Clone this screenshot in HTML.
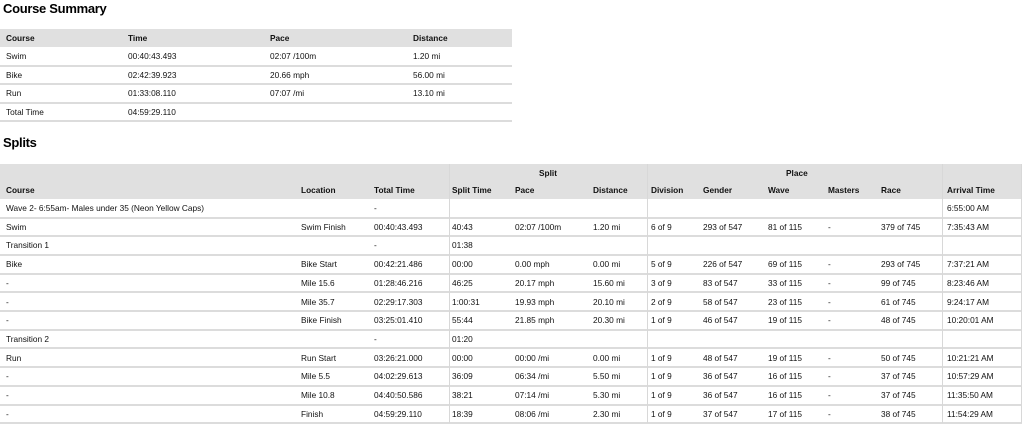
<!DOCTYPE html>
<html><head><meta charset="utf-8"><style>
body{margin:0;width:1024px;height:423px;background:#fff;position:relative;overflow:hidden;font-family:"Liberation Sans",sans-serif;color:#111}
.t{position:absolute;font-size:8.3px;white-space:nowrap;line-height:10px}
.b{font-weight:bold}
.h{position:absolute;font-weight:bold;font-size:13px;letter-spacing:-0.3px;color:#000}
.bg{position:absolute;background:#e0e0e0}
.l{position:absolute;background:#dcdcdc;height:2px}
.v{position:absolute;background:#d8d8d8;width:1px}
</style></head><body>
<div class="h" style="left:3px;top:1px">Course Summary</div>
<div class="bg" style="left:0;top:29px;width:512px;height:18px"></div>
<div class="h" style="left:3px;top:135px">Splits</div>
<div class="bg" style="left:0;top:164px;width:1022px;height:35px"></div>
<div id="c"></div>
<script>
var c=document.getElementById('c'),h='';
function t(x,y,s,b){h+='<div class="t'+(b?' b':'')+'" style="left:'+x+'px;top:'+(y-5)+'px">'+s+'</div>';}
var sx=[6,128,270,413];
['Course','Time','Pace','Distance'].forEach((s,i)=>t(sx[i],38,s,1));
var sr=[['Swim','00:40:43.493','02:07 /100m','1.20 mi'],['Bike','02:42:39.923','20.66 mph','56.00 mi'],['Run','01:33:08.110','07:07 /mi','13.10 mi'],['Total Time','04:59:29.110','','']];
sr.forEach((r,j)=>{var y=56+j*18.6;r.forEach((s,i)=>t(sx[i],y,s));h+='<div class="l" style="left:0;width:512px;top:'+Math.round(y+8.5)+'px"></div>';});
var x=[6,301,374,452,515,593,651,703,768,828,881,947];
t(539,173,'Split',1);t(786,173,'Place',1);
['Course','Location','Total Time','Split Time','Pace','Distance','Division','Gender','Wave','Masters','Race','Arrival Time'].forEach((s,i)=>t(x[i],190,s,1));
var rows=[
['Wave 2- 6:55am- Males under 35 (Neon Yellow Caps)','','-','','','','','','','','','6:55:00 AM'],
['Swim','Swim Finish','00:40:43.493','40:43','02:07 /100m','1.20 mi','6 of 9','293 of 547','81 of 115','-','379 of 745','7:35:43 AM'],
['Transition 1','','-','01:38','','','','','','','',''],
['Bike','Bike Start','00:42:21.486','00:00','0.00 mph','0.00 mi','5 of 9','226 of 547','69 of 115','-','293 of 745','7:37:21 AM'],
['-','Mile 15.6','01:28:46.216','46:25','20.17 mph','15.60 mi','3 of 9','83 of 547','33 of 115','-','99 of 745','8:23:46 AM'],
['-','Mile 35.7','02:29:17.303','1:00:31','19.93 mph','20.10 mi','2 of 9','58 of 547','23 of 115','-','61 of 745','9:24:17 AM'],
['-','Bike Finish','03:25:01.410','55:44','21.85 mph','20.30 mi','1 of 9','46 of 547','19 of 115','-','48 of 745','10:20:01 AM'],
['Transition 2','','-','01:20','','','','','','','',''],
['Run','Run Start','03:26:21.000','00:00','00:00 /mi','0.00 mi','1 of 9','48 of 547','19 of 115','-','50 of 745','10:21:21 AM'],
['-','Mile 5.5','04:02:29.613','36:09','06:34 /mi','5.50 mi','1 of 9','36 of 547','16 of 115','-','37 of 745','10:57:29 AM'],
['-','Mile 10.8','04:40:50.586','38:21','07:14 /mi','5.30 mi','1 of 9','36 of 547','16 of 115','-','37 of 745','11:35:50 AM'],
['-','Finish','04:59:29.110','18:39','08:06 /mi','2.30 mi','1 of 9','37 of 547','17 of 115','-','38 of 745','11:54:29 AM']];
rows.forEach((r,j)=>{var y=208+j*18.7;r.forEach((s,i)=>{if(s)t(x[i],y,s)});h+='<div class="l" style="left:0;width:1022px;top:'+Math.round(y+8.5)+'px"></div>';});
[449,647,942].forEach(vx=>{h+='<div class="v" style="left:'+vx+'px;top:164px;height:259px"></div>';});
h+='<div class="v" style="left:1021px;top:164px;height:259px"></div>';
c.innerHTML=h;
</script>
</body></html>
